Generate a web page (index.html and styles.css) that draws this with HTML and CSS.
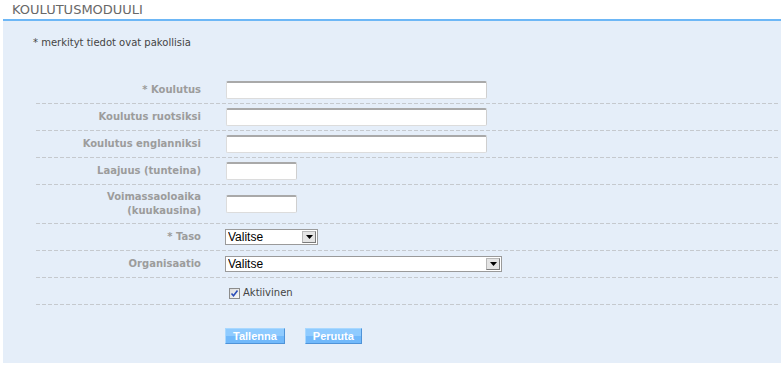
FILE: index.html
```html
<!DOCTYPE html>
<html lang="fi">
<head>
<meta charset="utf-8">
<title>Koulutusmoduuli</title>
<link rel="stylesheet" href="styles.css">
</head>
<body>
<div class="page">
  <div class="header"><h1 class="title">KOULUTUSMODUULI</h1></div>
  <div class="panel">
    <p class="note">* merkityt tiedot ovat pakollisia</p>
    <form class="form">
      <div class="row">
        <label class="label">* Koulutus</label>
        <div class="field"><input class="text wide" type="text"></div>
      </div>
      <div class="row">
        <label class="label">Koulutus ruotsiksi</label>
        <div class="field"><input class="text wide" type="text"></div>
      </div>
      <div class="row">
        <label class="label">Koulutus englanniksi</label>
        <div class="field"><input class="text wide" type="text"></div>
      </div>
      <div class="row">
        <label class="label">Laajuus (tunteina)</label>
        <div class="field"><input class="text short" type="text"></div>
      </div>
      <div class="row row-tall">
        <label class="label">Voimassaoloaika<br>(kuukausina)</label>
        <div class="field"><input class="text short" type="text"></div>
      </div>
      <div class="row">
        <label class="label">* Taso</label>
        <div class="field">
          <div class="select select-small">
            <select class="select-input"><option>Valitse</option></select>
            <span class="select-arrow"><svg width="7" height="4" viewBox="0 0 7 4"><path d="M0 0H7L3.5 4Z" fill="#000"/></svg></span>
          </div>
        </div>
      </div>
      <div class="row">
        <label class="label">Organisaatio</label>
        <div class="field">
          <div class="select select-large">
            <select class="select-input"><option>Valitse</option></select>
            <span class="select-arrow"><svg width="7" height="4" viewBox="0 0 7 4"><path d="M0 0H7L3.5 4Z" fill="#000"/></svg></span>
          </div>
        </div>
      </div>
      <div class="row row-check">
        <span class="label"></span>
        <div class="field">
          <label class="check">
            <span class="checkbox"><svg width="9" height="9" viewBox="0 0 9 9"><path d="M1.5 4.5L3.5 6.8L7.5 1.5" fill="none" stroke="#2c4db8" stroke-width="1.6"/></svg></span>
            <span class="check-text">Aktiivinen</span>
          </label>
        </div>
      </div>
    </form>
    <div class="actions">
      <button class="btn" type="button">Tallenna</button>
      <button class="btn" type="button">Peruuta</button>
    </div>
  </div>
</div>
</body>
</html>
```
FILE: styles.css
```css
html, body {
  margin: 0;
  padding: 0;
  background: #fff;
}
.page {
  margin-left: 3px;
  width: 778px;
  font-family: "DejaVu Sans", Verdana, sans-serif;
}
.header {
  height: 19px;
  border-bottom: 2px solid #6db7f6;
  padding-left: 9px;
}
.title {
  margin: 0;
  font-size: 13px;
  font-weight: normal;
  line-height: 19px;
  color: #686868;
}
.panel {
  background: #e5eef9;
  height: 342px;
  box-sizing: border-box;
  padding-top: 15px;
}
.note {
  margin: 0 0 28px 30px;
  font-size: 10px;
  line-height: 13px;
  color: #444;
}
.form {
  margin: 0 3px 0 33px;
}
.row {
  display: grid;
  grid-template-columns: 165px 1fr;
  column-gap: 24px;
  align-items: center;
  min-height: 18px;
  padding: 4px 0 5px;
  background-image: linear-gradient(90deg, #c5c9ce 0 4px, transparent 4px 6px);
  background-size: 6px 1px;
  background-repeat: repeat-x;
  background-position: left bottom;
}
.row-tall {
  padding: 5px 0 6px;
}
.row-check {
  padding: 8px 0 5px;
  min-height: 14px;
}
.label {
  text-align: right;
  font-size: 10px;
  font-weight: bold;
  line-height: 14px;
  color: #9c9c9c;
}
.field {
  display: flex;
  align-items: center;
}
.text {
  box-sizing: border-box;
  height: 18px;
  margin: 0 0 0 1px;
  padding: 0 2px;
  background: #fff;
  border: 1px solid #dcdcdc;
  border-top: 2px solid #a9a9a9;
  border-right-color: #cfcfcf;
  border-radius: 2px;
  font: 12px "Liberation Sans", Arial, sans-serif;
}
.wide { width: 261px; }
.short { width: 71px; }
.select {
  box-sizing: border-box;
  display: flex;
  align-items: center;
  height: 16px;
  background: #fff;
  border: 1px solid #9a9a9a;
}
.select-small { width: 93px; }
.select-large { width: 277px; }
.select-input {
  appearance: none;
  -webkit-appearance: none;
  flex: 1;
  min-width: 0;
  height: 14px;
  border: 0;
  margin: 0;
  padding: 0 0 0 2px;
  background: transparent;
  font: 12px/14px "Liberation Sans", Arial, sans-serif;
  color: #000;
}
.select-arrow {
  box-sizing: border-box;
  display: flex;
  align-items: center;
  justify-content: center;
  width: 14px;
  height: 12px;
  margin-right: 1px;
  background: #e4e4e4;
  border: 1px solid #7a7a7a;
  border-top-color: #b8b8b8;
  border-left-color: #b8b8b8;
}
.check {
  display: flex;
  align-items: center;
  gap: 3px;
  margin-left: 4px;
}
.checkbox {
  box-sizing: border-box;
  display: flex;
  align-items: center;
  justify-content: center;
  width: 11px;
  height: 11px;
  border: 1px solid #8c8c8c;
  background: linear-gradient(135deg, #dcdcdc, #f8f8f8);
}
.check-text {
  font-size: 10px;
  line-height: 14px;
  color: #444;
}
.actions {
  display: flex;
  gap: 20px;
  margin: 23px 0 0 222px;
}
.btn {
  box-sizing: border-box;
  height: 16px;
  padding: 0 7px;
  margin: 0;
  border: 1px solid;
  border-color: #a9d8ff #4f93d8 #4f93d8 #a9d8ff;
  background: linear-gradient(#8fcbff 0 50%, #71b9fb 50% 100%);
  color: #fff;
  font: bold 11px/14px "Liberation Sans", Arial, sans-serif;
  cursor: pointer;
}
```
